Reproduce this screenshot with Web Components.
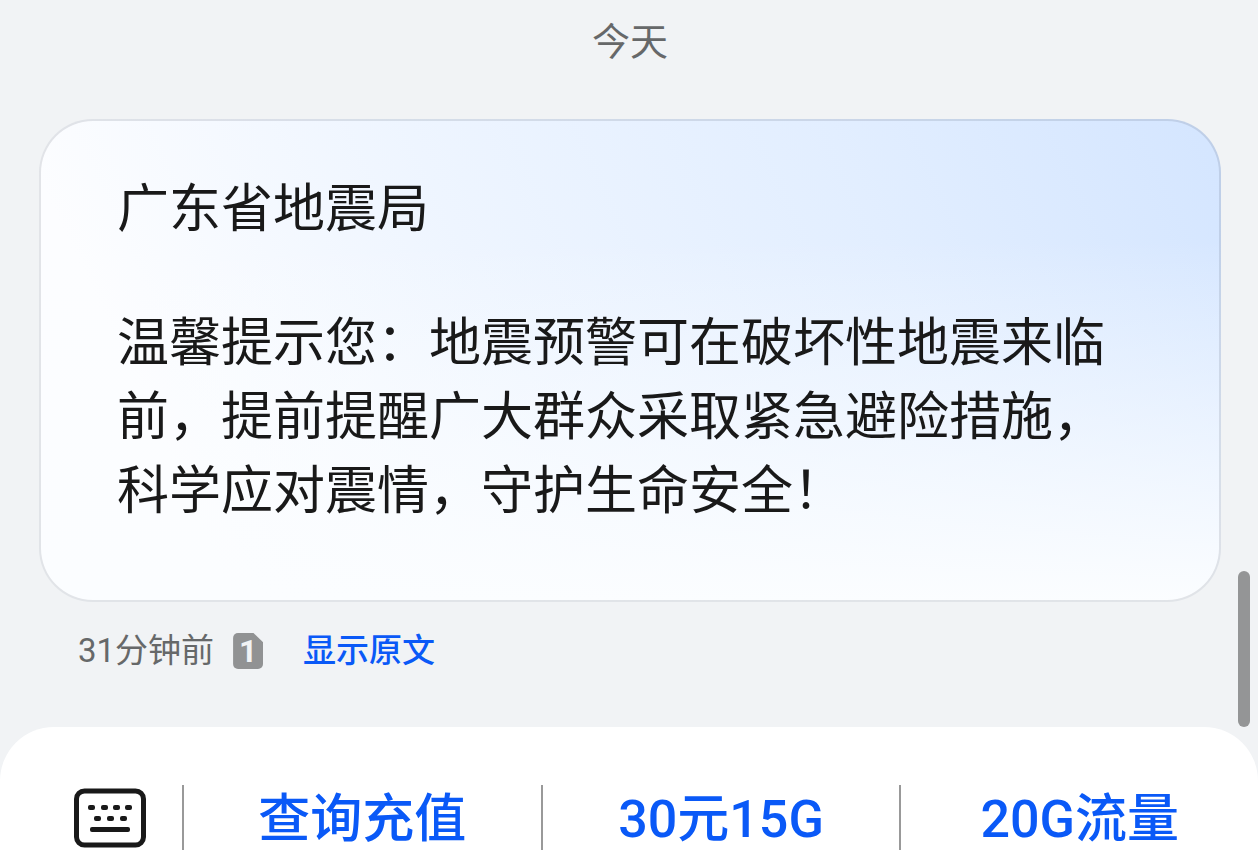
<!DOCTYPE html>
<html lang="zh-CN">
<head>
<meta charset="utf-8">
<meta name="viewport" content="width=device-width, initial-scale=1">
<title>短信</title>
<style>
html, body{
    height: 100%;
    margin: 0;
}
body{
    background-color: #f1f3f5;
    color: #191919;
    font-family: Roboto, "Noto Sans CJK SC", sans-serif;
}
</style>
</head>
<body>
<message-thread>
    <day-label>今天</day-label>
    <message-card>
        <span slot="title">广东省地震局</span>
        温馨提示您：地震预警可在破坏性地震来临前，提前提醒广大群众采取紧急避险措施，科学应对震情，守护生命安全！
    </message-card>
    <message-meta time="31分钟前" sim="1">显示原文</message-meta>
    <menu-bar slot="footer">
        <menu-item>查询充值</menu-item>
        <menu-item>30元15G</menu-item>
        <menu-item>20G流量</menu-item>
    </menu-bar>
</message-thread>

<script>
class MessageThread extends HTMLElement{
    constructor(){
        super();
        this.shadow = this.attachShadow({mode: "open"});
        this.shadow.innerHTML = `
        <style>
        :host{
            display: flex;
            flex-direction: column;
            min-height: 100%;
            position: relative;
        }
        main{
            flex: 1;
            padding: 12px 37px 48px 39px;
        }
        /* scroll indicator floats over the thread */
        .thumb{
            position: absolute;
            right: 8px;
            bottom: 130px;
            width: 12px;
            height: 156px;
            border-radius: 6px;
            background-color: #949596;
        }
        </style>
        <main><slot></slot></main>
        <slot name="footer"></slot>
        <div class="thumb"></div>
        `;
    }
}

class DayLabel extends HTMLElement{
    constructor(){
        super();
        this.shadow = this.attachShadow({mode: "open"});
        this.shadow.innerHTML = `
        <style>
        :host{
            display: block;
            margin-bottom: 47px;
            color: #666869;
            font-size: 38px;
            line-height: 60px;
            text-align: center;
        }
        </style>
        <slot></slot>
        `;
    }
}

class MessageCard extends HTMLElement{
    constructor(){
        super();
        this.shadow = this.attachShadow({mode: "open"});
        this.shadow.innerHTML = `
        <style>
        :host{
            display: block;
        }
        article{
            box-sizing: border-box;
            padding: 51px 76px 71px;
            border: 2px solid rgba(0,10,30,0.1);
            border-radius: 54px;
            background:
                linear-gradient(to bottom, rgba(251,253,255,0) 25%, #fbfdff 100%) border-box,
                linear-gradient(65deg, #fcfdff 14%, #eef5ff 42%, #e2eeff 72%, #d5e6ff 98%) border-box;
            font-size: 52px;
        }
        h2{
            margin: 0 0 60px;
            font-size: inherit;
            font-weight: 400;
            line-height: 75px;
        }
        p{
            margin: 0;
            line-height: 74px;
        }
        </style>
        <article>
            <h2><slot name="title"></slot></h2>
            <p><slot></slot></p>
        </article>
        `;
    }
}

class MessageMeta extends HTMLElement{
    constructor(){
        super();
        this.shadow = this.attachShadow({mode: "open"});
    }
    connectedCallback(){
        this.shadow.innerHTML = `
        <style>
        :host{
            display: flex;
            align-items: center;
            margin-top: 23px;
            padding-left: 39px;
            font-size: 33px;
            line-height: 52px;
        }
        time{
            color: #666869;
        }
        .sim{
            display: flex;
            justify-content: center;
            width: 30px;
            height: 36px;
            margin: 0 40px 0 19px;
            border-radius: 5px;
            background-color: #919293;
            clip-path: polygon(0 0, 68% 0, 100% 26%, 100% 100%, 0 100%);
            color: #f1f3f5;
            font-size: 32px;
            font-weight: 700;
            line-height: 36px;
        }
        a{
            color: #0a59f7;
            font-weight: 500;
            text-decoration: none;
        }
        </style>
        <time>${this.getAttribute("time")}</time>
        <span class="sim">${this.getAttribute("sim")}</span>
        <a href="#original"><slot></slot></a>
        `;
    }
}

class MenuBar extends HTMLElement{
    constructor(){
        super();
        this.shadow = this.attachShadow({mode: "open"});
        this.shadow.innerHTML = `
        <style>
        :host{
            display: block;
        }
        nav{
            display: flex;
            padding: 58px 0 7px;
            border-radius: 54px 54px 0 0;
            background-color: white;
        }
        .keyboard{
            display: flex;
            align-items: center;
            margin: 0;
            padding: 0 36px 0 74px;
            border: 0;
            background: none;
            cursor: pointer;
        }
        svg{
            display: block;
            width: 72px;
            height: 60px;
        }
        </style>
        <nav>
            <button class="keyboard" type="button" aria-label="键盘">
                <svg viewBox="0 0 72 60" fill="none" stroke="#191919">
                    <rect x="2.5" y="3" width="67" height="54" rx="8" stroke-width="5"/>
                    <g fill="#191919" stroke="none">
                        <rect x="14" y="17" width="7" height="5" rx="2"/>
                        <rect x="27" y="17" width="7" height="5" rx="2"/>
                        <rect x="39" y="17" width="7" height="5" rx="2"/>
                        <rect x="51" y="17" width="7" height="5" rx="2"/>
                        <rect x="20" y="28" width="7" height="5" rx="2"/>
                        <rect x="33" y="28" width="7" height="5" rx="2"/>
                        <rect x="46" y="28" width="7" height="5" rx="2"/>
                        <rect x="16" y="39" width="40" height="5" rx="2"/>
                    </g>
                </svg>
            </button>
            <slot></slot>
        </nav>
        `;
    }
}

class MenuItem extends HTMLElement{
    constructor(){
        super();
        this.shadow = this.attachShadow({mode: "open"});
        this.shadow.innerHTML = `
        <style>
        :host{
            display: flex;
            flex: 1;
            border-left: 2px solid #999;
        }
        button{
            flex: 1;
            margin: 0;
            padding: 5px 0 0;
            border: 0;
            background: none;
            color: #0a59f7;
            font: inherit;
            font-size: 52px;
            font-weight: 500;
            line-height: 60px;
            white-space: nowrap;
            cursor: pointer;
        }
        </style>
        <button type="button"><slot></slot></button>
        `;
    }
}

customElements.define("message-thread", MessageThread)
customElements.define("day-label", DayLabel)
customElements.define("message-card", MessageCard)
customElements.define("message-meta", MessageMeta)
customElements.define("menu-bar", MenuBar)
customElements.define("menu-item", MenuItem)
</script>
</body>
</html>
